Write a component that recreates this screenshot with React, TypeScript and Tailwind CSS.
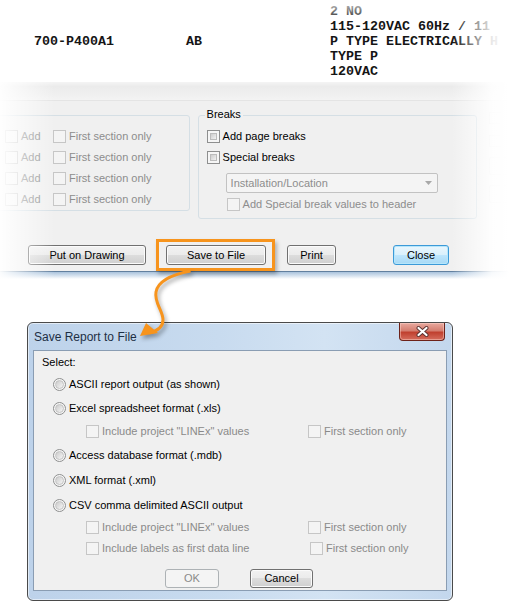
import React from "react";

const btn =
  "flex items-center justify-center rounded-[3px] border border-[#707070] bg-[linear-gradient(to_bottom,#f2f2f2_0%,#ebebeb_49%,#dddddd_50%,#cfcfcf_100%)] shadow-[inset_0_0_0_1px_#fbfbfb] text-[11px] leading-none text-black";

function Check({ on = false }: { on?: boolean }) {
  if (on) {
    return (
      <span className="block w-[13px] h-[13px] shrink-0 border border-[#8e8f8f] bg-[#f6f6f6] p-[2px]">
        <span className="block w-full h-full border border-[#bcbcbc] bg-[linear-gradient(135deg,#cdcdcd,#f2f2f2)]" />
      </span>
    );
  }
  return <span className="block w-[13px] h-[13px] shrink-0 border border-[#c6c6c6] bg-[#f4f4f4]" />;
}

function Radio() {
  return (
    <span className="flex items-center justify-center w-[13px] h-[13px] shrink-0 rounded-full border border-[#8e8f8f] bg-[#f6f6f6]">
      <span className="block w-[9px] h-[9px] rounded-full border border-[#c2c2c2] bg-[linear-gradient(135deg,#cbcbcb,#f6f6f6)]" />
    </span>
  );
}

function RadioRow({ label, h }: { label: string; h: string }) {
  return (
    <div className={`flex items-center pl-[19px] ${h}`}>
      <Radio />
      <span className="ml-[3px]">{label}</span>
    </div>
  );
}

function SubRow({ left, right, h, w }: { left: string; right: string; h: string; w: string }) {
  return (
    <div className={`flex items-center pl-[52px] text-[#8a8a8a] ${h}`}>
      <div className={`flex items-center ${w}`}>
        <Check />
        <span className="ml-[3px]">{left}</span>
      </div>
      <Check />
      <span className="ml-[3px]">{right}</span>
    </div>
  );
}

export default function App() {
  const addRows = [0, 1, 2, 3];

  return (
    <div className="relative w-[509px] h-[610px] overflow-hidden bg-white font-['Liberation_Sans',Arial,sans-serif] text-[11px] leading-[13px] text-black">
      {/* report listing */}
      <div className="flex h-[82px] pt-[4px] whitespace-nowrap font-['Liberation_Mono',monospace] font-bold text-[13.33px] leading-[15px] text-[#151515]">
        <div className="flex w-[330px] shrink-0 pl-[34px] pt-[30px]">
          <span className="w-[152px]">700-P400A1</span>
          <span>AB</span>
        </div>
        <div className="flex flex-col">
          <span>2 NO</span>
          <span>115-120VAC 60Hz / 11</span>
          <span>P TYPE ELECTRICALLY H</span>
          <span>TYPE P</span>
          <span>120VAC</span>
        </div>
      </div>

      {/* report window panel */}
      <div className="h-[189px] bg-[#f0f0f0]">
        <div className="h-[19px] border-b border-[#e4e4e4] bg-[linear-gradient(to_bottom,#f4f4f4,#ebebeb_25%,#f3f3f3)]" />
        <div className="flex items-start">
          {/* left group */}
          <div className="-ml-[12px] mt-[14px] w-[202px] h-[96px] rounded-[3px] border border-[#d5dfe5] pt-[10px] text-[#8d8d8d]">
            {addRows.map((i) => (
              <div key={i} className="flex items-center h-[21px] pl-[16px]">
                <Check />
                <span className="ml-[3px] w-[32px]">Add</span>
                <Check />
                <span className="ml-[3px]">First section only</span>
              </div>
            ))}
          </div>

          {/* Breaks group */}
          <div className="relative ml-[8px] mt-[14px] w-[280px] h-[104px] rounded-[3px] border border-[#d5dfe5] pt-[10px]">
            <span className="absolute left-[6px] -top-[8px] bg-[#f0f0f0] px-[2px]">Breaks</span>
            <div className="flex items-center h-[21px] pl-[8px]">
              <Check on />
              <span className="ml-[3px]">Add page breaks</span>
            </div>
            <div className="flex items-center h-[21px] pl-[8px]">
              <Check on />
              <span className="ml-[3px]">Special breaks</span>
            </div>
            <div className="ml-[27px] mt-[5px] flex items-center justify-between w-[212px] h-[20px] rounded-[2px] border border-[#c2c2c2] bg-[#f4f4f4] pl-[4px] pr-[5px] text-[#8d8d8d]">
              <span>Installation/Location</span>
              <svg width="7" height="4" viewBox="0 0 7 4">
                <path d="M0 0H7L3.5 4Z" fill="#a8a8a8" />
              </svg>
            </div>
            <div className="flex items-center h-[21px] mt-[1px] pl-[28px] text-[#8d8d8d]">
              <Check />
              <span className="ml-[3px]">Add Special break values to header</span>
            </div>
          </div>

          {/* faint column at right edge */}
          <div className="ml-[12px] mt-[11px] flex flex-col">
            <span className="block w-[13px] h-[12px] border border-[#e2e2e2]" />
            <span className="block mt-[11px] w-[13px] h-[12px] border border-[#e2e2e2]" />
            <span className="block mt-[10px] w-[20px] h-[18px] rounded-[2px] border border-[#e2e2e2]" />
            <span className="block mt-[10px] w-[20px] h-[18px] rounded-[2px] border border-[#e2e2e2]" />
          </div>
        </div>

        {/* buttons */}
        <div className="flex items-center mt-[20px]">
          <div className={`${btn} ml-[28px] w-[118px] h-[20px]`}>Put on Drawing</div>
          <div className="ml-[10px] border-[3px] border-[#f7941d] pl-[7px] pr-[6px] py-[3px] shadow-[2px_3px_4px_rgba(0,0,0,0.28)]">
            <div className={`${btn} w-[100px] h-[20px]`}>Save to File</div>
          </div>
          <div className={`${btn} ml-[12px] w-[49px] h-[20px]`}>Print</div>
          <div className="ml-[57px] flex items-center justify-center w-[56px] h-[20px] rounded-[3px] border border-[#3c9ad8] bg-[linear-gradient(to_bottom,#eaf6fd_0%,#d9f0fc_49%,#bee6fd_50%,#a7d9f5_100%)] shadow-[inset_0_0_0_1px_#b6e6fb] leading-none">
            Close
          </div>
        </div>
      </div>

      {/* window bottom edge */}
      <div className="h-[8px] border-t border-[#62809f] bg-[linear-gradient(to_bottom,#a9c2dc,#dbe6f1_60%,#ffffff)]" />

      {/* Save Report to File dialog */}
      <div className="ml-[27px] mt-[43px] w-[426px] h-[279px] flex flex-col rounded-[6px] border border-[#4a4a4a] bg-[linear-gradient(to_right,#bdd2ea,#c8dbef_45%,#d3e3f3_70%,#c3d7ed)] shadow-[inset_0_0_0_1px_rgba(255,255,255,0.55)]">
        <div className="flex h-[27px] items-start">
          <span className="mt-[7px] pl-[6px] text-[12px] leading-[14px] text-[#1e2f45]">Save Report to File</span>
          <div className="ml-auto mr-[7px] flex items-center justify-center w-[46px] h-[18px] rounded-b-[4px] border border-t-0 border-[#6d2219] bg-[linear-gradient(to_bottom,#e9a99f_0%,#d47e70_45%,#c0402f_55%,#d56d5d_100%)] shadow-[inset_0_0_0_1px_rgba(255,220,210,0.45)]">
            <svg width="13" height="11" viewBox="0 0 13 11">
              <path d="M2.5 2L10.5 9M10.5 2L2.5 9" stroke="#5a3230" strokeWidth="4" strokeLinecap="round" />
              <path d="M2.5 2L10.5 9M10.5 2L2.5 9" stroke="#ffffff" strokeWidth="2.2" strokeLinecap="round" />
            </svg>
          </div>
        </div>
        <div className="mx-[5px] h-[241px] border border-[#8a9db3] bg-[#f0f0f0]">
          <div className="flex items-center h-[22px] pl-[8px]">Select:</div>
          <RadioRow label="ASCII report output (as shown)" h="h-[23px]" />
          <RadioRow label="Excel spreadsheet format (.xls)" h="h-[24px]" />
          <SubRow left={'Include project "LINEx" values'} right="First section only" h="h-[23px]" w="w-[222px]" />
          <RadioRow label="Access database format (.mdb)" h="h-[24px]" />
          <RadioRow label="XML format (.xml)" h="h-[26px]" />
          <RadioRow label="CSV comma delimited ASCII output" h="h-[24px]" />
          <SubRow left={'Include project "LINEx" values'} right="First section only" h="h-[20px]" w="w-[222px]" />
          <SubRow left="Include labels as first data line" right="First section only" h="h-[22px]" w="w-[224px]" />
          <div className="flex mt-[10px] pl-[131px]">
            <div className="flex items-center justify-center w-[54px] h-[19px] rounded-[3px] border border-[#adb2b5] bg-[#f4f4f4] leading-none text-[#8a8a8a]">
              OK
            </div>
            <div className={`${btn} ml-[31px] w-[63px] h-[19px] border-[#3a3a3a]`}>Cancel</div>
          </div>
        </div>
      </div>

      {/* fades at the cropped edges */}
      <div className="absolute left-0 top-0 w-[509px] h-[22px] bg-[linear-gradient(to_bottom,rgba(255,255,255,0.85),rgba(255,255,255,0))]" />
      <div className="absolute left-0 top-[82px] w-[55px] h-[198px] bg-[linear-gradient(to_right,rgba(255,255,255,0.95),rgba(255,255,255,0.55)_40%,rgba(255,255,255,0))]" />
      <div className="absolute left-[452px] top-0 w-[57px] h-[282px] bg-[linear-gradient(to_right,rgba(255,255,255,0),rgba(255,255,255,0.9)_70%,#ffffff)]" />

      {/* orange callout arrow */}
      <svg
        className="absolute left-0 top-0 pointer-events-none drop-shadow-[2px_3px_2px_rgba(0,0,0,0.35)]"
        width="509"
        height="610"
        viewBox="0 0 509 610"
      >
        <path
          d="M190.5 271C175 274 158 280 156 292C154 303 163 310 163 320C163 327 157 331 149 333"
          fill="none"
          stroke="#f7941d"
          strokeWidth="3"
        />
        <path d="M140 336L146 323L158 333Z" fill="#f7941d" />
      </svg>
    </div>
  );
}
